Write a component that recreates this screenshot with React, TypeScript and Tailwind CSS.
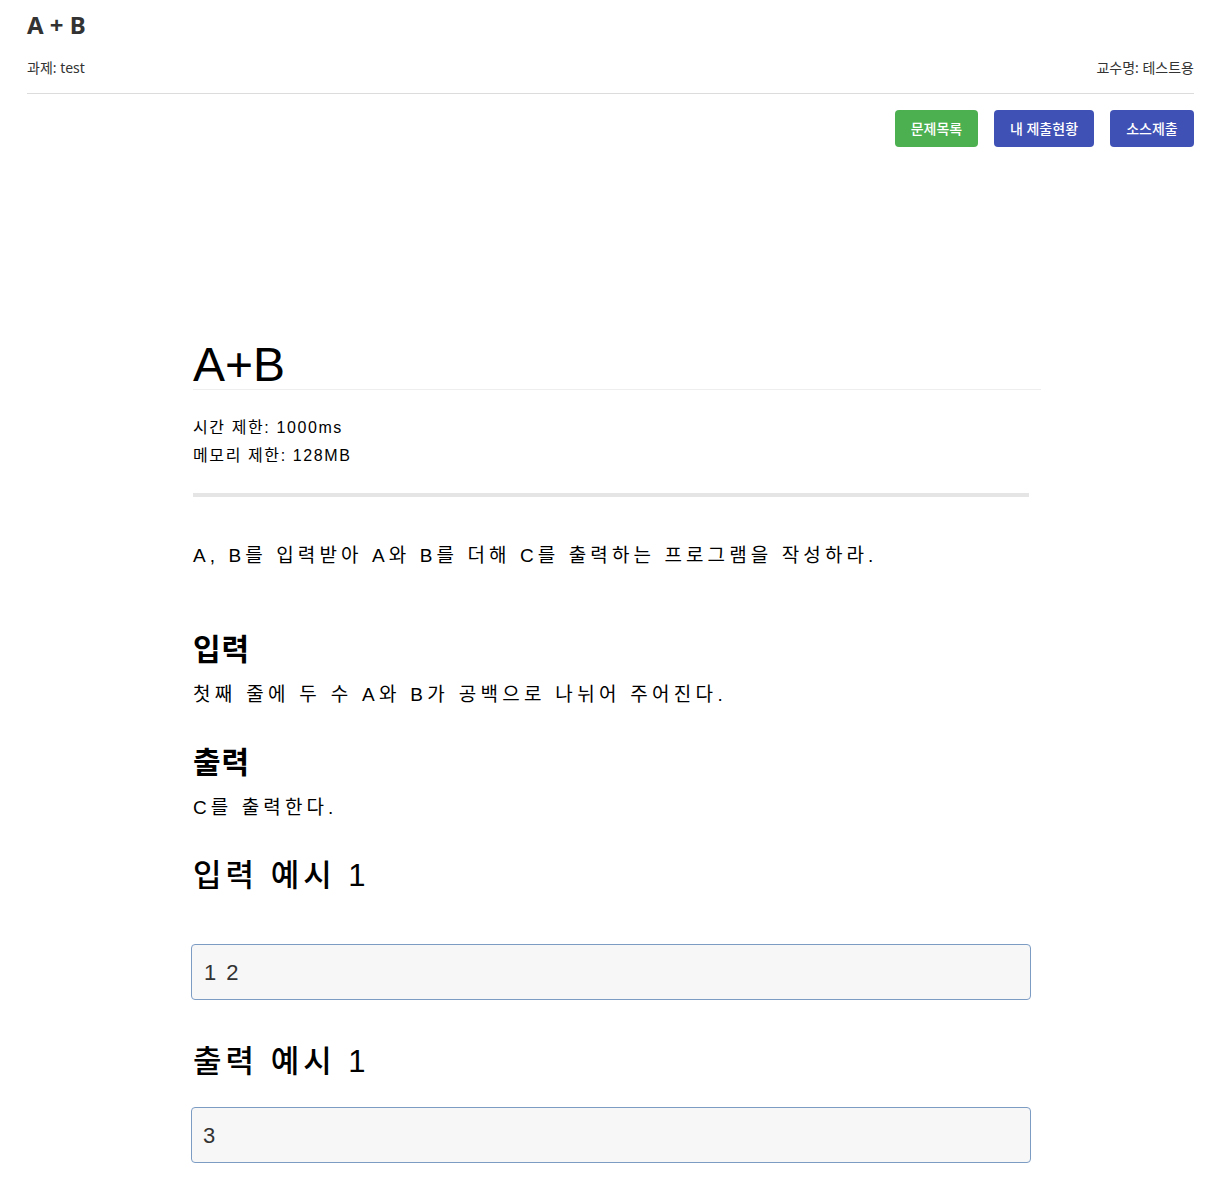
import React from "react";

const body = { fontFamily: '"Liberation Sans", "Noto Sans CJK KR", sans-serif' };
const head = { fontFamily: '"Noto Sans", "Noto Sans CJK KR", sans-serif' };

export default function App() {
  return (
    <div className="min-h-[1178px] bg-white text-black">
      <div className="pl-[27px] pr-[37px] pt-[9px]" style={head}>
        <h1 className="text-[24px] leading-[32px] font-bold text-[#333]">A + B</h1>
        <div className="mt-[17px] flex justify-between text-[14px] leading-[20px] text-[#333]">
          <span>과제: test</span>
          <span>교수명: 테스트용</span>
        </div>
        <div className="mt-[15px] border-t border-[#dcdcdc]" />
        <div className="mt-[16px] flex justify-end gap-[16px]">
          <button className="h-[37px] w-[83px] rounded-[4px] bg-[#4caf50] text-[14px] font-medium text-white">문제목록</button>
          <button className="h-[37px] w-[100px] rounded-[4px] bg-[#3f51b5] text-[14px] font-medium text-white">내 제출현황</button>
          <button className="h-[37px] w-[84px] rounded-[4px] bg-[#3f51b5] text-[14px] font-medium text-white">소스제출</button>
        </div>
      </div>

      <div className="ml-[191px] w-[850px]" style={body}>
        <h1 className="mt-[194px] ml-[2px] border-b border-[#eeeeee] text-[48px] leading-[48px] font-normal">A+B</h1>
        <div className="mt-[24px] ml-[2px] text-[16px] leading-[28px] tracking-[1.6px]">
          <div>시간 제한: 1000ms</div>
          <div>메모리 제한: 128MB</div>
        </div>
        <div className="mt-[23px] ml-[2px] h-[4px] w-[836px] bg-[#e5e5e5]" />
        <p className="mt-[45px] ml-[2px] text-[19px] leading-[28px] tracking-[4.1px]">
          A, B를 입력받아 A와 B를 더해 C를 출력하는 프로그램을 작성하라.
        </p>
        <h2 className="mt-[62px] ml-[2px] text-[30px] leading-[36px] font-bold tracking-[1px]">입력</h2>
        <p className="mt-[13px] ml-[2px] text-[19px] leading-[28px] tracking-[4.3px]">
          첫째 줄에 두 수 A와 B가 공백으로 나뉘어 주어진다.
        </p>
        <h2 className="mt-[36px] ml-[2px] text-[30px] leading-[36px] font-bold tracking-[1px]">출력</h2>
        <p className="mt-[13px] ml-[2px] text-[19px] leading-[28px] tracking-[4.1px]">C를 출력한다.</p>
        <h3 className="mt-[34px] ml-[2px] text-[31px] leading-[40px] font-medium tracking-[4px]">입력 예시 1</h3>
        <div className="mt-[48px] flex h-[56px] w-[840px] items-center rounded-[4px] border border-[#7d9cc4] bg-[#f7f7f7] px-[12px] text-[22px] tracking-[2px] text-[#333]">
          1 2
        </div>
        <h3 className="mt-[42px] ml-[2px] text-[31px] leading-[40px] font-medium tracking-[4px]">출력 예시 1</h3>
        <div className="mt-[25px] flex h-[56px] w-[840px] items-center rounded-[4px] border border-[#7d9cc4] bg-[#f7f7f7] px-[11px] text-[22px] text-[#333]">
          3
        </div>
      </div>
    </div>
  );
}
